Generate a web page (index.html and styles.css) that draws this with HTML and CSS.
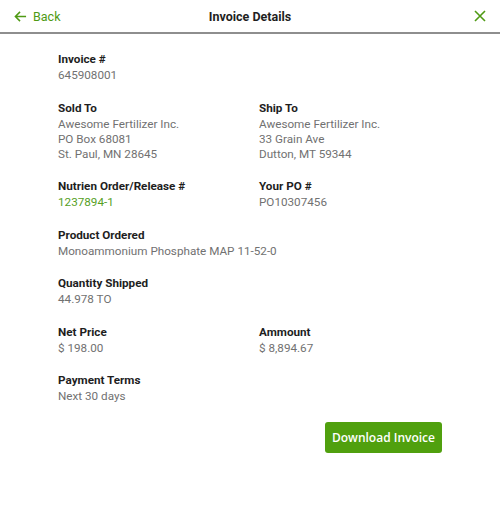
FILE: index.html
```html
<!DOCTYPE html>
<html lang="en">
<head>
<meta charset="utf-8">
<title>Invoice Details</title>
<link rel="stylesheet" href="styles.css">
</head>
<body>
<header class="topbar">
  <a class="back" href="#">
    <svg class="back-icon" width="13" height="13" viewBox="0 0 14 14" aria-hidden="true">
      <path d="M13 7H1.5M6.5 2 1.5 7l5 5" fill="none" stroke="#4f9a14" stroke-width="1.6"/>
    </svg>
    <span>Back</span>
  </a>
  <h1 class="title">Invoice Details</h1>
  <a class="close" href="#" aria-label="Close">
    <svg width="12" height="12" viewBox="0 0 12 12" aria-hidden="true">
      <path d="M1 1l10 10M11 1 1 11" fill="none" stroke="#4f9a14" stroke-width="1.6"/>
    </svg>
  </a>
</header>
<main class="content">
  <div class="grid">
    <div class="field full">
      <div class="label">Invoice #</div>
      <div class="value">645908001</div>
    </div>
    <div class="field">
      <div class="label">Sold To</div>
      <div class="value">Awesome Fertilizer Inc.<br>PO Box 68081<br>St. Paul, MN 28645</div>
    </div>
    <div class="field">
      <div class="label">Ship To</div>
      <div class="value">Awesome Fertilizer Inc.<br>33 Grain Ave<br>Dutton, MT 59344</div>
    </div>
    <div class="field">
      <div class="label">Nutrien Order/Release #</div>
      <div class="value link">1237894-1</div>
    </div>
    <div class="field">
      <div class="label">Your PO #</div>
      <div class="value">PO10307456</div>
    </div>
    <div class="field full">
      <div class="label">Product Ordered</div>
      <div class="value">Monoammonium Phosphate MAP 11-52-0</div>
    </div>
    <div class="field full">
      <div class="label">Quantity Shipped</div>
      <div class="value">44.978 TO</div>
    </div>
    <div class="field">
      <div class="label">Net Price</div>
      <div class="value">$ 198.00</div>
    </div>
    <div class="field">
      <div class="label">Ammount</div>
      <div class="value">$ 8,894.67</div>
    </div>
    <div class="field full">
      <div class="label">Payment Terms</div>
      <div class="value">Next 30 days</div>
    </div>
  </div>
  <div class="actions">
    <button class="download" type="button">Download Invoice</button>
  </div>
</main>
</body>
</html>
```

FILE: styles.css
```css
* { box-sizing: border-box; }
html, body { margin: 0; padding: 0; background: #fff; }
body {
  font-family: Roboto, "Liberation Sans", Arial, sans-serif;
  color: #222;
  width: 500px;
}
.topbar {
  height: 34px;
  border-bottom: 2px solid #8e8e8e;
  display: flex;
  align-items: center;
  justify-content: space-between;
  padding: 0 13px 0 14px;
  position: relative;
}
.back {
  display: flex;
  align-items: center;
  gap: 6px;
  color: #4f9a14;
  text-decoration: none;
  font-size: 12.5px;
}
.back-icon { display: block; }
.title {
  position: absolute;
  left: 0;
  right: 0;
  text-align: center;
  margin: 0;
  font-size: 12.5px;
  font-weight: 700;
  color: #1f1f1f;
  pointer-events: none;
}
.close { display: flex; align-items: center; padding-right: 1px; }
.content {
  padding: 17px 58px 0 58px;
}
.grid {
  display: grid;
  grid-template-columns: 201px 1fr;
  row-gap: 16.5px;
}
.field.full { grid-column: 1 / -1; }
.label {
  font-size: 11.7px;
  font-weight: 700;
  line-height: 17px;
  color: #1e1e1e;
}
.value {
  font-size: 11.7px;
  line-height: 15px;
  color: #717171;
}
.value.link { color: #56a01f; }
.actions {
  display: flex;
  justify-content: flex-end;
  margin-top: 18px;
}
.download {
  font-family: "Open Sans", "Liberation Sans", Arial, sans-serif;
  font-size: 12px;
  font-weight: 600;
  color: #fff;
  background: #50a00e;
  border: none;
  border-radius: 3px;
  width: 117px;
  height: 31px;
  padding: 0;
  cursor: pointer;
}
```
